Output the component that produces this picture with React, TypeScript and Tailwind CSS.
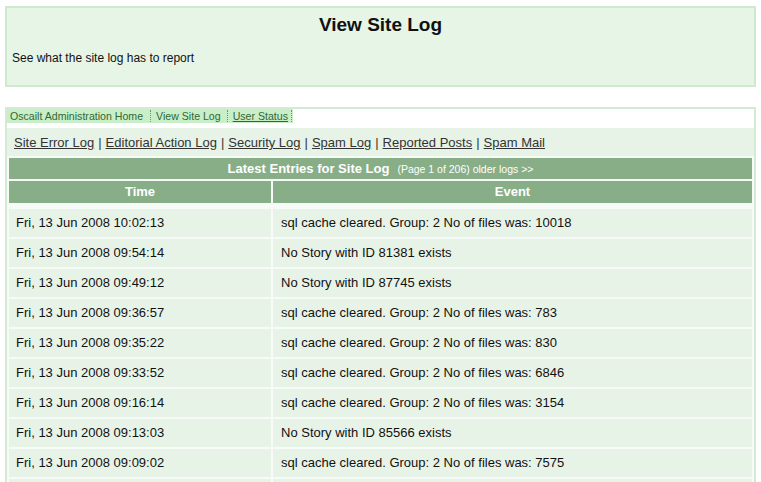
import React from "react";

const rows: [string, string][] = [
  ["Fri, 13 Jun 2008 10:02:13", "sql cache cleared. Group: 2 No of files was: 10018"],
  ["Fri, 13 Jun 2008 09:54:14", "No Story with ID 81381 exists"],
  ["Fri, 13 Jun 2008 09:49:12", "No Story with ID 87745 exists"],
  ["Fri, 13 Jun 2008 09:36:57", "sql cache cleared. Group: 2 No of files was: 783"],
  ["Fri, 13 Jun 2008 09:35:22", "sql cache cleared. Group: 2 No of files was: 830"],
  ["Fri, 13 Jun 2008 09:33:52", "sql cache cleared. Group: 2 No of files was: 6846"],
  ["Fri, 13 Jun 2008 09:16:14", "sql cache cleared. Group: 2 No of files was: 3154"],
  ["Fri, 13 Jun 2008 09:13:03", "No Story with ID 85566 exists"],
  ["Fri, 13 Jun 2008 09:09:02", "sql cache cleared. Group: 2 No of files was: 7575"],
  ["", ""],
];

const links = ["Site Error Log", "Editorial Action Log", "Security Log", "Spam Log", "Reported Posts", "Spam Mail"];

export default function App() {
  return (
    <div className="w-[761px] h-[482px] overflow-hidden bg-white text-[#111] font-['Liberation_Sans',Arial,sans-serif]">
      <div className="pt-[6px] px-[5px]">
        <div className="h-[81px] border-2 border-[#cfe9cf] bg-[#e6f5e6] flex flex-col">
          <h1 className="text-center font-bold text-[19px] leading-[22px] mt-[6px] text-[#111]">View Site Log</h1>
          <p className="text-[12px] leading-[14px] mt-[15px] pl-[5px]">See what the site log has to report</p>
        </div>
      </div>
      <div className="mt-[20px] mx-[5px] border-l-2 border-r-2 border-t-2 border-[#d3ebd3] bg-white">
        <div className="h-[19px] flex items-start">
          <div className="flex h-[14px] items-center bg-[#c9efc9] text-[10.6px] leading-[12px] text-[#336633] pr-[1px]">
            <span className="pl-[3px] pr-[7px]">Oscailt Administration Home</span>
            <span className="h-[12px] border-l border-dotted border-[#669966]" />
            <span className="pl-[5px] pr-[6px]">View Site Log</span>
            <span className="h-[12px] border-l border-dotted border-[#669966]" />
            <span className="pl-[5px] pr-[3px] underline">User Status</span>
            <span className="h-[12px] border-l border-dotted border-[#669966]" />
          </div>
        </div>
        <div className="h-[30px] bg-[#e6f3e6] flex items-center pl-[7px] text-[13px] text-[#333]">
          {links.map((l, i) => (
            <React.Fragment key={l}>
              {i > 0 && <span className="px-[4px]">|</span>}
              <span className="underline">{l}</span>
            </React.Fragment>
          ))}
        </div>
        <table className="w-full border-separate border-spacing-[2px] bg-[#f7fbf7] -mt-[2px]">
          <thead>
            <tr>
              <th colSpan={2} className="h-[21px] bg-[#87ae87] text-white font-bold text-[13px] p-0">
                Latest Entries for Site Log
                <span className="font-normal text-[10.5px] ml-[8px]">(Page 1 of 206) older logs &gt;&gt;</span>
              </th>
            </tr>
            <tr>
              <th className="h-[22px] w-[262px] bg-[#87ae87] text-white font-bold text-[13px] p-0">Time</th>
              <th className="h-[22px] bg-[#87ae87] text-white font-bold text-[13px] p-0">Event</th>
            </tr>
            <tr>
              <td colSpan={2} className="h-[2px] p-0" />
            </tr>
          </thead>
          <tbody>
            {rows.map(([t, e], i) => (
              <tr key={i}>
                <td className="h-[28px] bg-[#e8f3e8] text-[13px] pl-[7px]">{t}</td>
                <td className="h-[28px] bg-[#e8f3e8] text-[13px] pl-[8px]">{e}</td>
              </tr>
            ))}
          </tbody>
        </table>
      </div>
    </div>
  );
}
